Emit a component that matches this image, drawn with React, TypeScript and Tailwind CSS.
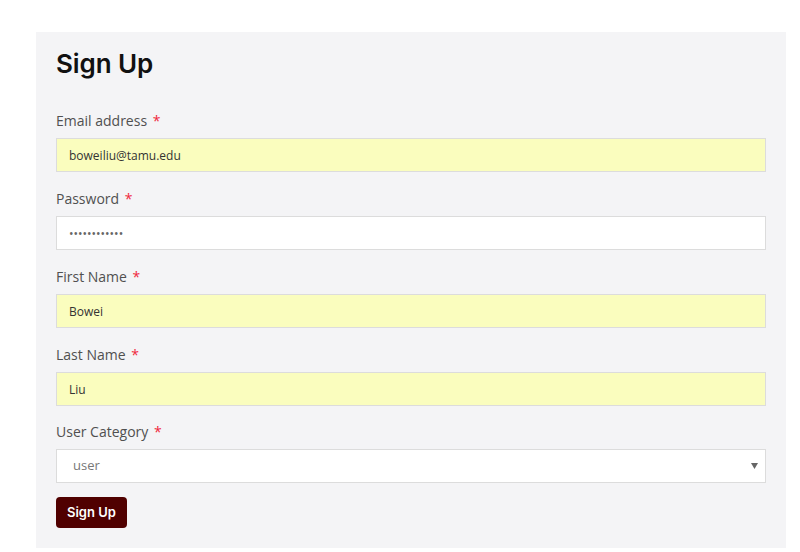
import React from 'react';

const inputCls =
  "block w-full h-[34px] border border-[#dcdcdc] px-[12px] text-[12px] outline-none font-['Open_Sans',sans-serif]";

function Field({ label, last, children }: { label: string; last?: boolean; children: React.ReactNode }) {
  return (
    <div className={last ? 'mb-[14px]' : 'mb-[16px]'}>
      <label className="block h-[22px] mb-[6px] text-[14px] leading-[22px] text-[#505050]">
        {label} <span className="text-[#f0283c] ml-[2px]">*</span>
      </label>
      {children}
    </div>
  );
}

export default function App() {
  return (
    <div className="min-h-[552px] bg-white pt-[32px] pl-[36px]">
      <div className="w-[750px] h-[516px] bg-[#f4f4f6] px-[20px] pt-[16px]">
        <h1 className="text-[26px] leading-[32px] font-semibold text-[#111] mb-[30px] tracking-[-0.1px] font-['Inter','Noto_Sans',sans-serif]">
          Sign Up
        </h1>
        <form className="font-['Open_Sans','Noto_Sans',sans-serif]">
          <Field label="Email address">
            <input className={`${inputCls} bg-[#fafdbe] text-[#333]`} defaultValue="boweiliu@tamu.edu" />
          </Field>
          <Field label="Password">
            <input type="password" className={`${inputCls} bg-white text-[#666]`} defaultValue="abcdefghijkl" />
          </Field>
          <Field label="First Name">
            <input className={`${inputCls} bg-[#fafdbe] text-[#333]`} defaultValue="Bowei" />
          </Field>
          <div className="mb-[15px]">
            <label className="block h-[22px] mb-[6px] text-[14px] leading-[22px] text-[#505050]">
              Last Name <span className="text-[#f0283c] ml-[2px]">*</span>
            </label>
            <input className={`${inputCls} bg-[#fafdbe] text-[#333]`} defaultValue="Liu" />
          </div>
          <Field label="User Category" last>
            <div className="relative h-[34px] border border-[#dcdcdc] bg-white flex items-center pl-[16px]">
              <span className="text-[13px] text-[#777]">user</span>
              <svg className="absolute right-[7px] top-[13px]" width="7" height="6" viewBox="0 0 7 6">
                <path d="M0 0h7L3.5 6z" fill="#666" />
              </svg>
            </div>
          </Field>
          <button
            type="button"
            className="h-[31px] px-[11px] rounded-[4px] bg-[#500000] text-white text-[13px] font-semibold font-['Inter','Noto_Sans',sans-serif]"
          >
            Sign Up
          </button>
        </form>
      </div>
    </div>
  );
}
